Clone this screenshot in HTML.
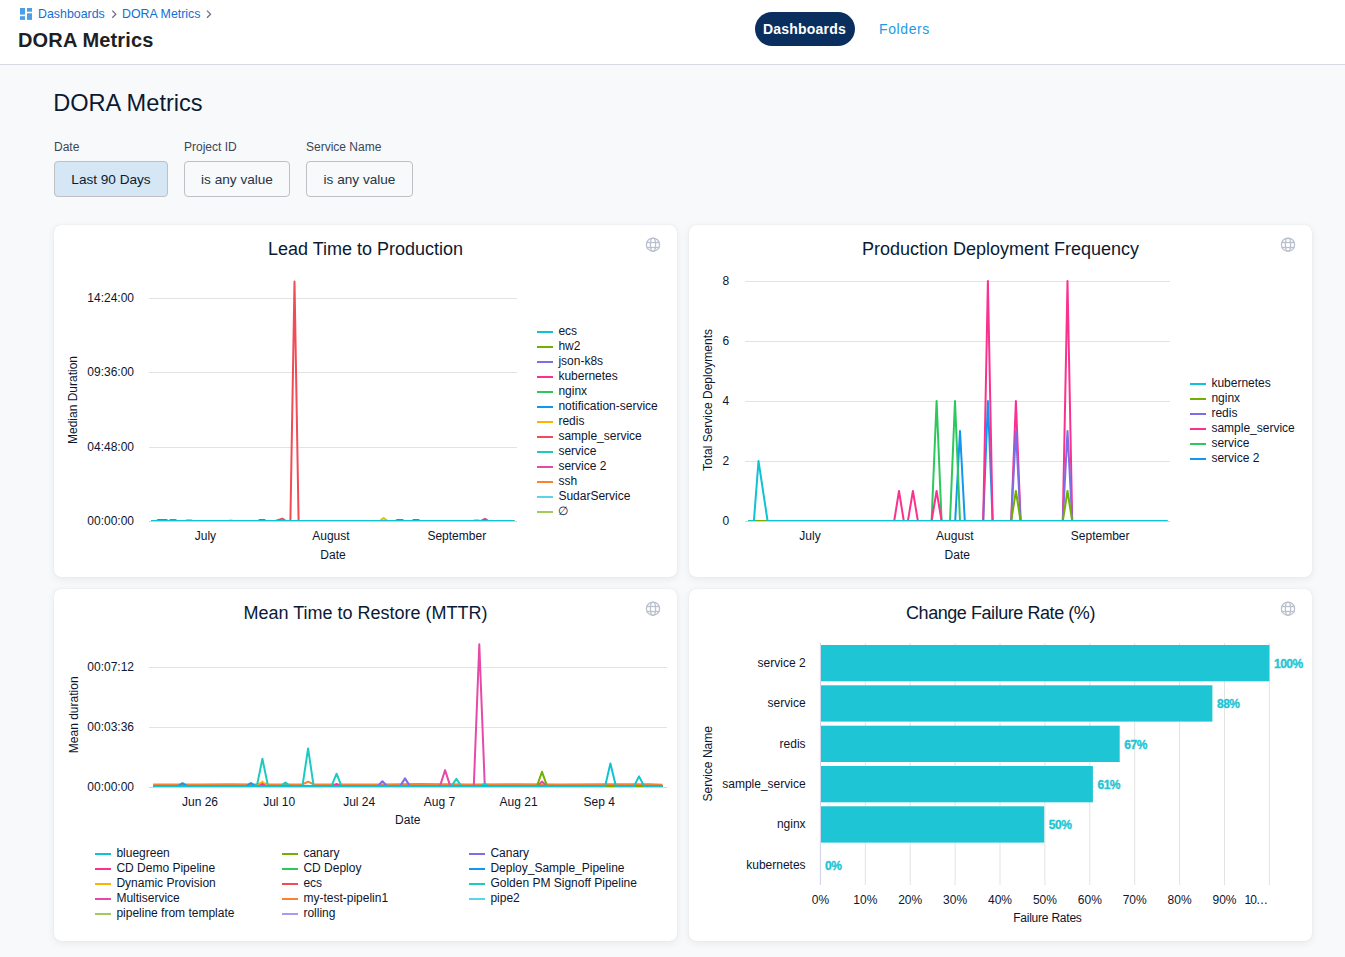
<!DOCTYPE html>
<html><head><meta charset="utf-8">
<style>
*{box-sizing:border-box;margin:0;padding:0}
html,body{width:1345px;height:957px;overflow:hidden;background:#f8f9fa;font-family:"Liberation Sans",sans-serif;position:relative}
.abs{position:absolute;white-space:nowrap}
#hdr{position:absolute;left:0;top:0;width:1345px;height:65px;background:#fff;border-bottom:1px solid #d6d8e5}
.bc{color:#136fd3;font-size:12.4px;top:6px;line-height:16px}
.chev{color:#6b6d85;font-size:12px}
.pill{position:absolute;left:755px;top:12px;width:100px;height:34px;border-radius:17px;background:#0a2f5f}
.card{position:absolute;width:623px;height:352px;background:#fff;border-radius:7px;box-shadow:0 0 1px rgba(0,0,0,.14),0 2px 8px rgba(0,0,0,.07)}
.btn{position:absolute;top:161px;height:36px;border:1px solid #bfc0c3;border-radius:4px;background:transparent;color:#263447;font-size:13.6px;line-height:35px;text-align:center}
.lbl{position:absolute;top:139px;color:#3a4658;font-size:12px;line-height:16px}
.ct{position:absolute;top:238px;font-size:18px;color:#0b1a33;text-align:center;line-height:22px}
</style></head><body>
<div id="hdr">
  <svg class="abs" style="left:0;top:0" width="220" height="26">
    <g fill="#4c9fe4"><rect x="20" y="8" width="5" height="6.6"/><rect x="20" y="16.2" width="5" height="3.7"/><rect x="27" y="8" width="5" height="3.7"/><rect x="27" y="13.3" width="5" height="6.6"/></g>
    <g fill="none" stroke="#6e6a85" stroke-width="1.3"><polyline points="112.3,10.6 115.8,14.15 112.3,17.7"/><polyline points="207,10.6 210.5,14.15 207,17.7"/></g>
  </svg>
  <div class="abs bc" style="left:38px">Dashboards</div>
    <div class="abs bc" style="left:122px">DORA Metrics</div>
    <div class="abs" style="left:18px;top:28px;font-size:20px;font-weight:bold;color:#1d1f24;line-height:24px;letter-spacing:0.15px">DORA Metrics</div>
  <div class="pill"></div>
  <div class="abs" style="left:763px;top:20px;font-size:14px;font-weight:bold;color:#fff;line-height:18px;letter-spacing:0.2px">Dashboards</div>
  <div class="abs" style="left:879px;top:20px;font-size:14px;color:#1a9be6;line-height:18px;letter-spacing:0.6px">Folders</div>
</div>

<div class="abs" style="left:53.2px;top:89px;font-size:23.6px;color:#0b1a33;line-height:28px">DORA Metrics</div>
<div class="lbl" style="left:54px">Date</div>
<div class="lbl" style="left:184px">Project ID</div>
<div class="lbl" style="left:306px">Service Name</div>
<div class="btn" style="left:54px;width:114px;background:#d5e6f5;color:#0d1b2e">Last 90 Days</div>
<div class="btn" style="left:184px;width:106px">is any value</div>
<div class="btn" style="left:306px;width:107px">is any value</div>

<div class="card" style="left:54px;top:225px"></div>
<div class="card" style="left:689px;top:225px"></div>
<div class="card" style="left:54px;top:589px"></div>
<div class="card" style="left:689px;top:589px"></div>

<div class="ct" style="left:54px;width:623px">Lead Time to Production</div>
<div class="ct" style="left:689px;width:623px">Production Deployment Frequency</div>
<div class="ct" style="left:54px;width:623px;top:602px">Mean Time to Restore (MTTR)</div>
<div class="ct" style="left:689px;width:623px;top:602px;letter-spacing:-0.44px">Change Failure Rate (%)</div>

<svg class="abs" style="left:0;top:0" width="1345" height="957" font-family='"Liberation Sans", sans-serif'>
<line x1="149" x2="517" y1="298.5" y2="298.5" stroke="#e3e3e3" stroke-width="1"/>
<line x1="149" x2="517" y1="372.5" y2="372.5" stroke="#e3e3e3" stroke-width="1"/>
<line x1="149" x2="517" y1="447.5" y2="447.5" stroke="#e3e3e3" stroke-width="1"/>
<text x="134.0" y="302.0" text-anchor="end" font-size="12" fill="#0c1630" font-weight="normal" >14:24:00</text>
<text x="134.0" y="376.0" text-anchor="end" font-size="12" fill="#0c1630" font-weight="normal" >09:36:00</text>
<text x="134.0" y="451.0" text-anchor="end" font-size="12" fill="#0c1630" font-weight="normal" >04:48:00</text>
<text x="134.0" y="525.0" text-anchor="end" font-size="12" fill="#0c1630" font-weight="normal" >00:00:00</text>
<text x="205.4" y="540.1" text-anchor="middle" font-size="12" fill="#0c1630" font-weight="normal" >July</text>
<text x="330.9" y="540.1" text-anchor="middle" font-size="12" fill="#0c1630" font-weight="normal" >August</text>
<text x="456.8" y="540.1" text-anchor="middle" font-size="12" fill="#0c1630" font-weight="normal" >September</text>
<text x="333.0" y="558.8" text-anchor="middle" font-size="12" fill="#0c1630" font-weight="normal" >Date</text>
<text x="0" y="0" transform="translate(77.2,400) rotate(-90)" text-anchor="middle" font-size="12" fill="#0c1630">Median Duration</text>
<polyline points="156.5,521.0 158.0,520.0 166.5,520.0 168.0,521.0" fill="none" stroke="#fb3190" stroke-width="2" stroke-linejoin="round" stroke-linecap="butt"/>
<polyline points="258.0,521.0 259.5,520.0 264.5,520.0 266.0,521.0" fill="none" stroke="#fb3190" stroke-width="2" stroke-linejoin="round" stroke-linecap="butt"/>
<polyline points="395.5,521.0 397.0,520.0 402.5,520.0 404.0,521.0" fill="none" stroke="#fb3190" stroke-width="2" stroke-linejoin="round" stroke-linecap="butt"/>
<polyline points="412.0,521.0 413.5,520.0 418.5,520.0 420.0,521.0" fill="none" stroke="#fb3190" stroke-width="2" stroke-linejoin="round" stroke-linecap="butt"/>
<polyline points="481.0,521.0 485.0,518.8 488.5,521.0" fill="none" stroke="#fb3190" stroke-width="2" stroke-linejoin="round" stroke-linecap="butt"/>
<polyline points="169.0,521.0 170.5,520.0 175.5,520.0 177.0,521.0" fill="none" stroke="#f14b56" stroke-width="2" stroke-linejoin="round" stroke-linecap="butt"/>
<polyline points="275.4,521.0 282.3,518.6 285.9,521.0" fill="none" stroke="#f14b56" stroke-width="2" stroke-linejoin="round" stroke-linecap="butt"/>
<polyline points="185.5,521.0 187.0,520.4 191.0,520.4 192.5,521.0" fill="none" stroke="#7b6ee6" stroke-width="2" stroke-linejoin="round" stroke-linecap="butt"/>
<polyline points="228.5,521.0 230.0,520.4 231.5,520.4 233.0,521.0" fill="none" stroke="#fdb400" stroke-width="2" stroke-linejoin="round" stroke-linecap="butt"/>
<polyline points="379.6,521.0 383.6,518.1 387.8,521.0" fill="none" stroke="#fdb400" stroke-width="2" stroke-linejoin="round" stroke-linecap="butt"/>
<polyline points="473.0,521.0 474.5,520.3 478.5,520.3 480.0,521.0" fill="none" stroke="#fdb400" stroke-width="2" stroke-linejoin="round" stroke-linecap="butt"/>
<polyline points="151.0,521.0 290.4,521.0 294.5,281.5 298.6,521.0 514.4,521.0" fill="none" stroke="#f14b56" stroke-width="2" stroke-linejoin="round" stroke-linecap="butt"/>
<polyline points="151.0,521.0 514.4,521.0" fill="none" stroke="#10c2d4" stroke-width="2" stroke-linejoin="round" stroke-linecap="butt"/>
<line x1="149" x2="517" y1="521.5" y2="521.5" stroke="#cfd1ea" stroke-width="1"/>
<rect x="537" y="331" width="16" height="2" fill="#10c2d4"/>
<text x="558.4" y="335.1" text-anchor="start" font-size="12" fill="#0c1630" font-weight="normal" >ecs</text>
<rect x="537" y="346" width="16" height="2" fill="#72b000"/>
<text x="558.4" y="350.1" text-anchor="start" font-size="12" fill="#0c1630" font-weight="normal" >hw2</text>
<rect x="537" y="361" width="16" height="2" fill="#7b6ee6"/>
<text x="558.4" y="365.1" text-anchor="start" font-size="12" fill="#0c1630" font-weight="normal" >json-k8s</text>
<rect x="537" y="376" width="16" height="2" fill="#fb3190"/>
<text x="558.4" y="380.1" text-anchor="start" font-size="12" fill="#0c1630" font-weight="normal" >kubernetes</text>
<rect x="537" y="391" width="16" height="2" fill="#2cc85c"/>
<text x="558.4" y="395.1" text-anchor="start" font-size="12" fill="#0c1630" font-weight="normal" >nginx</text>
<rect x="537" y="406" width="16" height="2" fill="#1297f0"/>
<text x="558.4" y="410.1" text-anchor="start" font-size="12" fill="#0c1630" font-weight="normal" >notification-service</text>
<rect x="537" y="421" width="16" height="2" fill="#fdb400"/>
<text x="558.4" y="425.1" text-anchor="start" font-size="12" fill="#0c1630" font-weight="normal" >redis</text>
<rect x="537" y="436" width="16" height="2" fill="#f14b56"/>
<text x="558.4" y="440.1" text-anchor="start" font-size="12" fill="#0c1630" font-weight="normal" >sample_service</text>
<rect x="537" y="451" width="16" height="2" fill="#1ccac0"/>
<text x="558.4" y="455.1" text-anchor="start" font-size="12" fill="#0c1630" font-weight="normal" >service</text>
<rect x="537" y="466" width="16" height="2" fill="#e64aa8"/>
<text x="558.4" y="470.1" text-anchor="start" font-size="12" fill="#0c1630" font-weight="normal" >service 2</text>
<rect x="537" y="481" width="16" height="2" fill="#f9822f"/>
<text x="558.4" y="485.1" text-anchor="start" font-size="12" fill="#0c1630" font-weight="normal" >ssh</text>
<rect x="537" y="496" width="16" height="2" fill="#5cd4e8"/>
<text x="558.4" y="500.1" text-anchor="start" font-size="12" fill="#0c1630" font-weight="normal" >SudarService</text>
<rect x="537" y="511" width="16" height="2" fill="#a3c95a"/>
<text x="558.4" y="515.1" text-anchor="start" font-size="12" fill="#0c1630" font-weight="normal" >∅</text>
<g fill="none" stroke="#b9c1cd" stroke-width="1.3"><circle cx="653" cy="244.7" r="6.6"/><ellipse cx="653" cy="244.7" rx="2.6" ry="6.6"/><line x1="646.8" x2="659.2" y1="242.5" y2="242.5"/><line x1="646.8" x2="659.2" y1="247.5" y2="247.5"/></g>
<line x1="745" x2="1170" y1="281.5" y2="281.5" stroke="#e3e3e3" stroke-width="1"/>
<line x1="745" x2="1170" y1="341.5" y2="341.5" stroke="#e3e3e3" stroke-width="1"/>
<line x1="745" x2="1170" y1="401.5" y2="401.5" stroke="#e3e3e3" stroke-width="1"/>
<line x1="745" x2="1170" y1="461.5" y2="461.5" stroke="#e3e3e3" stroke-width="1"/>
<text x="729.3" y="284.9" text-anchor="end" font-size="12" fill="#0c1630" font-weight="normal" >8</text>
<text x="729.3" y="344.9" text-anchor="end" font-size="12" fill="#0c1630" font-weight="normal" >6</text>
<text x="729.3" y="404.9" text-anchor="end" font-size="12" fill="#0c1630" font-weight="normal" >4</text>
<text x="729.3" y="464.9" text-anchor="end" font-size="12" fill="#0c1630" font-weight="normal" >2</text>
<text x="729.3" y="524.9" text-anchor="end" font-size="12" fill="#0c1630" font-weight="normal" >0</text>
<text x="810.0" y="540.2" text-anchor="middle" font-size="12" fill="#0c1630" font-weight="normal" >July</text>
<text x="954.8" y="540.2" text-anchor="middle" font-size="12" fill="#0c1630" font-weight="normal" >August</text>
<text x="1100.2" y="540.2" text-anchor="middle" font-size="12" fill="#0c1630" font-weight="normal" >September</text>
<text x="957.3" y="558.8" text-anchor="middle" font-size="12" fill="#0c1630" font-weight="normal" >Date</text>
<text x="0" y="0" transform="translate(712.3,400) rotate(-90)" text-anchor="middle" font-size="12" fill="#0c1630">Total Service Deployments</text>
<polyline points="748.3,521.0 955.2,521.0 960.0,431.0 964.8,521.0 983.2,521.0 987.9,401.0 992.6,521.0 1167.2,521.0" fill="none" stroke="#1297f0" stroke-width="2" stroke-linejoin="round" stroke-linecap="butt"/>
<polyline points="748.3,521.0 931.6,521.0 936.6,401.0 941.6,521.0 950.0,521.0 955.0,401.0 960.0,521.0 1167.2,521.0" fill="none" stroke="#2cc85c" stroke-width="2" stroke-linejoin="round" stroke-linecap="butt"/>
<polyline points="748.3,521.0 894.2,521.0 899.0,491.0 903.8,521.0 907.9,521.0 912.9,491.0 917.9,521.0 931.6,521.0 936.6,491.0 941.6,521.0 983.2,521.0 987.9,281.0 992.6,521.0 1011.2,521.0 1015.9,401.0 1020.6,521.0 1062.8,521.0 1067.5,281.0 1072.2,521.0 1167.2,521.0" fill="none" stroke="#fb3190" stroke-width="2" stroke-linejoin="round" stroke-linecap="butt"/>
<polyline points="748.3,521.0 1011.2,521.0 1015.9,431.0 1020.6,521.0 1062.8,521.0 1067.5,431.0 1072.2,521.0 1167.2,521.0" fill="none" stroke="#7b6ee6" stroke-width="2" stroke-linejoin="round" stroke-linecap="butt"/>
<polyline points="748.3,521.0 1011.2,521.0 1015.9,491.0 1020.6,521.0 1062.8,521.0 1067.5,491.0 1072.2,521.0 1167.2,521.0" fill="none" stroke="#72b000" stroke-width="2" stroke-linejoin="round" stroke-linecap="butt"/>
<polyline points="748.3,521.0 753.9,521.0 758.5,461.0 767.6,521.0 1167.2,521.0" fill="none" stroke="#10c2d4" stroke-width="2" stroke-linejoin="round" stroke-linecap="butt"/>
<line x1="745" x2="1170" y1="521.5" y2="521.5" stroke="#cfd1ea" stroke-width="1"/>
<rect x="1190" y="383" width="16" height="2" fill="#10c2d4"/>
<text x="1211.4" y="387.0" text-anchor="start" font-size="12" fill="#0c1630" font-weight="normal" >kubernetes</text>
<rect x="1190" y="398" width="16" height="2" fill="#72b000"/>
<text x="1211.4" y="402.0" text-anchor="start" font-size="12" fill="#0c1630" font-weight="normal" >nginx</text>
<rect x="1190" y="413" width="16" height="2" fill="#7b6ee6"/>
<text x="1211.4" y="417.0" text-anchor="start" font-size="12" fill="#0c1630" font-weight="normal" >redis</text>
<rect x="1190" y="428" width="16" height="2" fill="#fb3190"/>
<text x="1211.4" y="432.0" text-anchor="start" font-size="12" fill="#0c1630" font-weight="normal" >sample_service</text>
<rect x="1190" y="443" width="16" height="2" fill="#2cc85c"/>
<text x="1211.4" y="447.0" text-anchor="start" font-size="12" fill="#0c1630" font-weight="normal" >service</text>
<rect x="1190" y="458" width="16" height="2" fill="#1297f0"/>
<text x="1211.4" y="462.0" text-anchor="start" font-size="12" fill="#0c1630" font-weight="normal" >service 2</text>
<g fill="none" stroke="#b9c1cd" stroke-width="1.3"><circle cx="1288" cy="244.7" r="6.6"/><ellipse cx="1288" cy="244.7" rx="2.6" ry="6.6"/><line x1="1281.8" x2="1294.2" y1="242.5" y2="242.5"/><line x1="1281.8" x2="1294.2" y1="247.5" y2="247.5"/></g>
<line x1="149" x2="667" y1="667.5" y2="667.5" stroke="#e3e3e3" stroke-width="1"/>
<line x1="149" x2="667" y1="727.5" y2="727.5" stroke="#e3e3e3" stroke-width="1"/>
<text x="134.0" y="671.0" text-anchor="end" font-size="12" fill="#0c1630" font-weight="normal" >00:07:12</text>
<text x="134.0" y="731.0" text-anchor="end" font-size="12" fill="#0c1630" font-weight="normal" >00:03:36</text>
<text x="134.0" y="791.0" text-anchor="end" font-size="12" fill="#0c1630" font-weight="normal" >00:00:00</text>
<text x="200.0" y="806.0" text-anchor="middle" font-size="12" fill="#0c1630" font-weight="normal" >Jun 26</text>
<text x="279.2" y="806.0" text-anchor="middle" font-size="12" fill="#0c1630" font-weight="normal" >Jul 10</text>
<text x="359.2" y="806.0" text-anchor="middle" font-size="12" fill="#0c1630" font-weight="normal" >Jul 24</text>
<text x="439.4" y="806.0" text-anchor="middle" font-size="12" fill="#0c1630" font-weight="normal" >Aug 7</text>
<text x="518.6" y="806.0" text-anchor="middle" font-size="12" fill="#0c1630" font-weight="normal" >Aug 21</text>
<text x="599.3" y="806.0" text-anchor="middle" font-size="12" fill="#0c1630" font-weight="normal" >Sep 4</text>
<text x="407.8" y="824.2" text-anchor="middle" font-size="12" fill="#0c1630" font-weight="normal" >Date</text>
<text x="0" y="0" transform="translate(77.5,714.8) rotate(-90)" text-anchor="middle" font-size="12" fill="#0c1630">Mean duration</text>
<polyline points="153.2,786.4 662.5,786.4" fill="none" stroke="#a99cf0" stroke-width="2" stroke-linejoin="round" stroke-linecap="butt"/>
<polyline points="153.2,786.4 662.5,786.4" fill="none" stroke="#a3c95a" stroke-width="2" stroke-linejoin="round" stroke-linecap="butt"/>
<polyline points="153.2,786.4 662.5,786.4" fill="none" stroke="#5cd4e8" stroke-width="2" stroke-linejoin="round" stroke-linecap="butt"/>
<polyline points="153.2,784.4 200.0,784.6 230.0,784.2 256.0,784.4 262.4,782.9 268.0,784.4 302.5,784.4 308.1,781.7 313.7,784.4 380.0,784.5 420.0,784.0 470.0,784.6 520.0,784.2 560.0,784.6 600.0,784.3 650.0,784.3 662.5,784.7" fill="none" stroke="#f9822f" stroke-width="2" stroke-linejoin="round" stroke-linecap="butt"/>
<polyline points="153.2,786.4 439.9,786.4 445.1,770.1 450.3,786.4 473.8,786.4 479.3,644.2 484.8,786.4 537.0,786.4 542.0,781.5 547.0,786.4 662.5,786.4" fill="none" stroke="#e64aa8" stroke-width="2" stroke-linejoin="round" stroke-linecap="butt"/>
<polyline points="153.2,786.4 256.8,786.4 262.4,758.8 268.1,786.4 280.4,786.4 285.4,782.6 290.4,786.4 302.4,786.4 308.1,748.4 313.7,786.4 331.4,786.4 336.6,773.7 341.6,786.4 451.4,786.4 456.4,778.8 461.4,786.4 480.8,786.4 484.8,783.5 488.8,786.4 662.5,786.4" fill="none" stroke="#1ccac0" stroke-width="2" stroke-linejoin="round" stroke-linecap="butt"/>
<polyline points="153.2,786.4 662.5,786.4" fill="none" stroke="#f14b56" stroke-width="2" stroke-linejoin="round" stroke-linecap="butt"/>
<polyline points="153.2,786.4 257.4,786.4 262.4,781.6 267.4,786.4 662.5,786.4" fill="none" stroke="#fdb400" stroke-width="2" stroke-linejoin="round" stroke-linecap="butt"/>
<polyline points="153.2,786.4 177.5,786.4 182.5,783.2 187.5,786.4 245.9,786.4 250.9,783.0 255.9,786.4 662.5,786.4" fill="none" stroke="#1297f0" stroke-width="2" stroke-linejoin="round" stroke-linecap="butt"/>
<polyline points="153.2,786.4 662.5,786.4" fill="none" stroke="#2cc85c" stroke-width="2" stroke-linejoin="round" stroke-linecap="butt"/>
<polyline points="153.2,786.4 258.4,786.4 262.4,784.0 266.4,786.4 332.6,786.4 336.6,784.0 340.6,786.4 662.5,786.4" fill="none" stroke="#fb3190" stroke-width="2" stroke-linejoin="round" stroke-linecap="butt"/>
<polyline points="153.2,786.4 377.4,786.4 382.4,781.2 387.4,786.4 400.0,786.4 405.0,778.4 410.0,786.4 662.5,786.4" fill="none" stroke="#7b6ee6" stroke-width="2" stroke-linejoin="round" stroke-linecap="butt"/>
<polyline points="153.2,786.4 536.8,786.4 542.0,771.8 547.2,786.4 662.5,786.4" fill="none" stroke="#72b000" stroke-width="2" stroke-linejoin="round" stroke-linecap="butt"/>
<polyline points="153.2,786.4 605.1,786.4 610.4,763.4 616.0,786.4 633.9,786.4 639.0,776.4 644.3,786.4 662.5,786.4" fill="none" stroke="#10c2d4" stroke-width="2" stroke-linejoin="round" stroke-linecap="butt"/>
<line x1="149" x2="667" y1="787.5" y2="787.5" stroke="#cfd1ea" stroke-width="1"/>
<rect x="95" y="853" width="16" height="2" fill="#10c2d4"/>
<text x="116.4" y="857.1" text-anchor="start" font-size="12" fill="#0c1630" font-weight="normal" >bluegreen</text>
<rect x="95" y="868" width="16" height="2" fill="#fb3190"/>
<text x="116.4" y="872.1" text-anchor="start" font-size="12" fill="#0c1630" font-weight="normal" >CD Demo Pipeline</text>
<rect x="95" y="883" width="16" height="2" fill="#fdb400"/>
<text x="116.4" y="887.1" text-anchor="start" font-size="12" fill="#0c1630" font-weight="normal" >Dynamic Provision</text>
<rect x="95" y="898" width="16" height="2" fill="#e64aa8"/>
<text x="116.4" y="902.1" text-anchor="start" font-size="12" fill="#0c1630" font-weight="normal" >Multiservice</text>
<rect x="95" y="913" width="16" height="2" fill="#a3c95a"/>
<text x="116.4" y="917.1" text-anchor="start" font-size="12" fill="#0c1630" font-weight="normal" >pipeline from template</text>
<rect x="282" y="853" width="16" height="2" fill="#72b000"/>
<text x="303.4" y="857.1" text-anchor="start" font-size="12" fill="#0c1630" font-weight="normal" >canary</text>
<rect x="282" y="868" width="16" height="2" fill="#2cc85c"/>
<text x="303.4" y="872.1" text-anchor="start" font-size="12" fill="#0c1630" font-weight="normal" >CD Deploy</text>
<rect x="282" y="883" width="16" height="2" fill="#f14b56"/>
<text x="303.4" y="887.1" text-anchor="start" font-size="12" fill="#0c1630" font-weight="normal" >ecs</text>
<rect x="282" y="898" width="16" height="2" fill="#f9822f"/>
<text x="303.4" y="902.1" text-anchor="start" font-size="12" fill="#0c1630" font-weight="normal" >my-test-pipelin1</text>
<rect x="282" y="913" width="16" height="2" fill="#a99cf0"/>
<text x="303.4" y="917.1" text-anchor="start" font-size="12" fill="#0c1630" font-weight="normal" >rolling</text>
<rect x="469" y="853" width="16" height="2" fill="#7b6ee6"/>
<text x="490.4" y="857.1" text-anchor="start" font-size="12" fill="#0c1630" font-weight="normal" >Canary</text>
<rect x="469" y="868" width="16" height="2" fill="#1297f0"/>
<text x="490.4" y="872.1" text-anchor="start" font-size="12" fill="#0c1630" font-weight="normal" >Deploy_Sample_Pipeline</text>
<rect x="469" y="883" width="16" height="2" fill="#1ccac0"/>
<text x="490.4" y="887.1" text-anchor="start" font-size="12" fill="#0c1630" font-weight="normal" >Golden PM Signoff Pipeline</text>
<rect x="469" y="898" width="16" height="2" fill="#5cd4e8"/>
<text x="490.4" y="902.1" text-anchor="start" font-size="12" fill="#0c1630" font-weight="normal" >pipe2</text>
<g fill="none" stroke="#b9c1cd" stroke-width="1.3"><circle cx="653" cy="608.7" r="6.6"/><ellipse cx="653" cy="608.7" rx="2.6" ry="6.6"/><line x1="646.8" x2="659.2" y1="606.5" y2="606.5"/><line x1="646.8" x2="659.2" y1="611.5" y2="611.5"/></g>
<line x1="865.3" x2="865.3" y1="643" y2="885" stroke="#e3e3e3" stroke-width="1"/>
<line x1="910.2" x2="910.2" y1="643" y2="885" stroke="#e3e3e3" stroke-width="1"/>
<line x1="955.1" x2="955.1" y1="643" y2="885" stroke="#e3e3e3" stroke-width="1"/>
<line x1="1000.0" x2="1000.0" y1="643" y2="885" stroke="#e3e3e3" stroke-width="1"/>
<line x1="1044.9" x2="1044.9" y1="643" y2="885" stroke="#e3e3e3" stroke-width="1"/>
<line x1="1089.8" x2="1089.8" y1="643" y2="885" stroke="#e3e3e3" stroke-width="1"/>
<line x1="1134.7" x2="1134.7" y1="643" y2="885" stroke="#e3e3e3" stroke-width="1"/>
<line x1="1179.6" x2="1179.6" y1="643" y2="885" stroke="#e3e3e3" stroke-width="1"/>
<line x1="1224.5" x2="1224.5" y1="643" y2="885" stroke="#e3e3e3" stroke-width="1"/>
<line x1="1269.4" x2="1269.4" y1="643" y2="885" stroke="#e3e3e3" stroke-width="1"/>
<line x1="820.4" x2="820.4" y1="643" y2="885" stroke="#cfd1ea" stroke-width="1"/>
<rect x="821.0" y="645.0" width="448.4" height="36.3" fill="#1ec5d4"/>
<text x="805.6" y="667.0" text-anchor="end" font-size="12" fill="#0c1630" font-weight="normal" >service 2</text>
<text x="1274.0" y="668.1" text-anchor="start" font-size="12" fill="#1ec5d4" font-weight="bold" letter-spacing="-0.5" stroke="#1ec5d4" stroke-width="0.35">100%</text>
<rect x="821.0" y="685.3" width="391.4" height="36.3" fill="#1ec5d4"/>
<text x="805.6" y="707.3" text-anchor="end" font-size="12" fill="#0c1630" font-weight="normal" >service</text>
<text x="1217.0" y="708.4" text-anchor="start" font-size="12" fill="#1ec5d4" font-weight="bold" letter-spacing="-0.5" stroke="#1ec5d4" stroke-width="0.35">88%</text>
<rect x="821.0" y="725.7" width="298.7" height="36.3" fill="#1ec5d4"/>
<text x="805.6" y="747.6" text-anchor="end" font-size="12" fill="#0c1630" font-weight="normal" >redis</text>
<text x="1124.3" y="748.7" text-anchor="start" font-size="12" fill="#1ec5d4" font-weight="bold" letter-spacing="-0.5" stroke="#1ec5d4" stroke-width="0.35">67%</text>
<rect x="821.0" y="766.0" width="271.9" height="36.3" fill="#1ec5d4"/>
<text x="805.6" y="788.0" text-anchor="end" font-size="12" fill="#0c1630" font-weight="normal" >sample_service</text>
<text x="1097.5" y="789.1" text-anchor="start" font-size="12" fill="#1ec5d4" font-weight="bold" letter-spacing="-0.5" stroke="#1ec5d4" stroke-width="0.35">61%</text>
<rect x="821.0" y="806.3" width="223.2" height="36.3" fill="#1ec5d4"/>
<text x="805.6" y="828.3" text-anchor="end" font-size="12" fill="#0c1630" font-weight="normal" >nginx</text>
<text x="1048.8" y="829.4" text-anchor="start" font-size="12" fill="#1ec5d4" font-weight="bold" letter-spacing="-0.5" stroke="#1ec5d4" stroke-width="0.35">50%</text>
<text x="805.6" y="868.6" text-anchor="end" font-size="12" fill="#0c1630" font-weight="normal" >kubernetes</text>
<text x="825.0" y="869.7" text-anchor="start" font-size="12" fill="#1ec5d4" font-weight="bold" letter-spacing="-0.5" stroke="#1ec5d4" stroke-width="0.35">0%</text>
<text x="820.4" y="903.5" text-anchor="middle" font-size="12" fill="#0c1630" font-weight="normal" >0%</text>
<text x="865.3" y="903.5" text-anchor="middle" font-size="12" fill="#0c1630" font-weight="normal" >10%</text>
<text x="910.2" y="903.5" text-anchor="middle" font-size="12" fill="#0c1630" font-weight="normal" >20%</text>
<text x="955.1" y="903.5" text-anchor="middle" font-size="12" fill="#0c1630" font-weight="normal" >30%</text>
<text x="1000.0" y="903.5" text-anchor="middle" font-size="12" fill="#0c1630" font-weight="normal" >40%</text>
<text x="1044.9" y="903.5" text-anchor="middle" font-size="12" fill="#0c1630" font-weight="normal" >50%</text>
<text x="1089.8" y="903.5" text-anchor="middle" font-size="12" fill="#0c1630" font-weight="normal" >60%</text>
<text x="1134.7" y="903.5" text-anchor="middle" font-size="12" fill="#0c1630" font-weight="normal" >70%</text>
<text x="1179.6" y="903.5" text-anchor="middle" font-size="12" fill="#0c1630" font-weight="normal" >80%</text>
<text x="1224.5" y="903.5" text-anchor="middle" font-size="12" fill="#0c1630" font-weight="normal" >90%</text>
<text x="1267.2" y="903.5" text-anchor="end" font-size="12" fill="#0c1630" font-weight="normal" letter-spacing="-0.9">10…</text>
<text x="1047.4" y="922.3" text-anchor="middle" font-size="12" fill="#0c1630" font-weight="normal" letter-spacing="-0.22">Failure Rates</text>
<text x="0" y="0" transform="translate(712.2,763.8) rotate(-90)" text-anchor="middle" font-size="12" fill="#0c1630">Service Name</text>
<g fill="none" stroke="#b9c1cd" stroke-width="1.3"><circle cx="1288" cy="608.7" r="6.6"/><ellipse cx="1288" cy="608.7" rx="2.6" ry="6.6"/><line x1="1281.8" x2="1294.2" y1="606.5" y2="606.5"/><line x1="1281.8" x2="1294.2" y1="611.5" y2="611.5"/></g>
</svg>
</body></html>
